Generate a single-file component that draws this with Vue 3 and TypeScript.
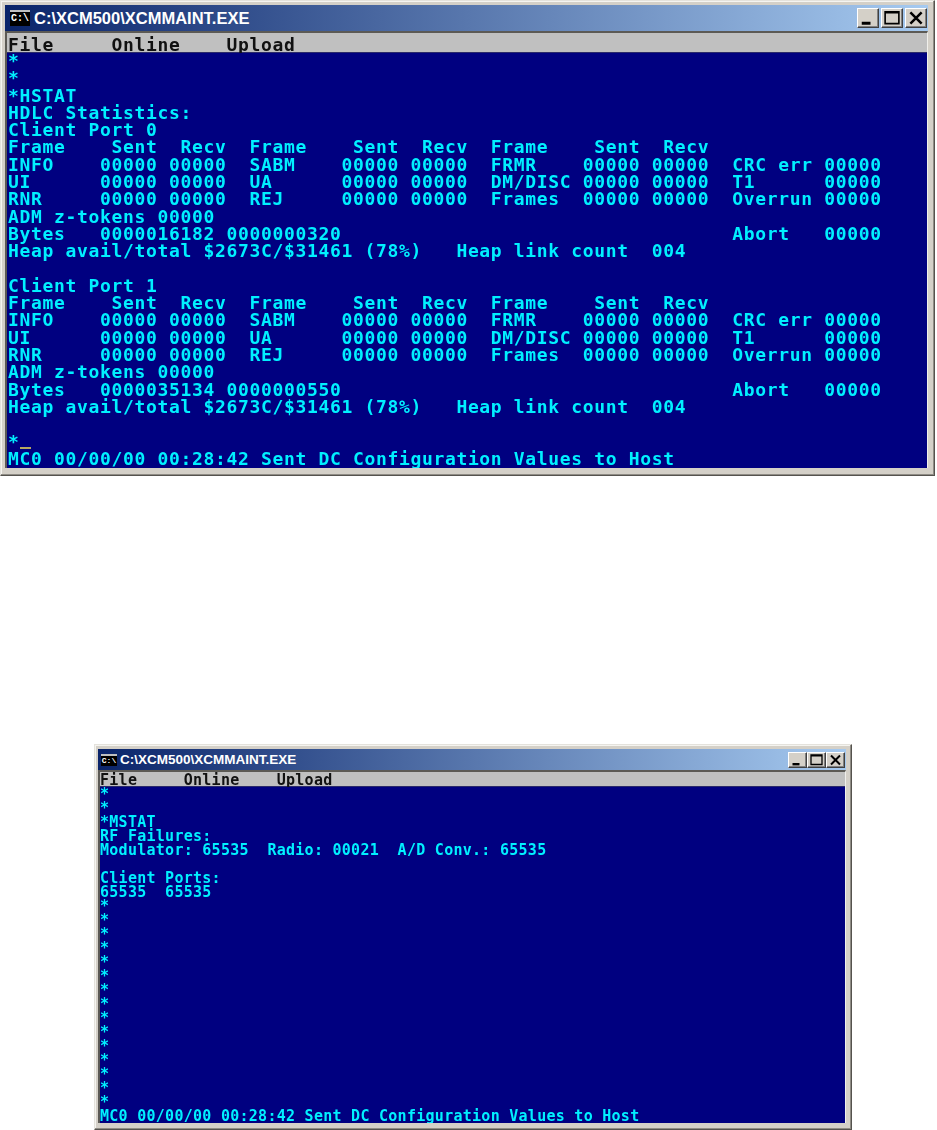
<script setup lang="ts">
const stats = (port: string, bytes: string): string[] => [
  `Client Port ${port}`,
  'Frame    Sent  Recv  Frame    Sent  Recv  Frame    Sent  Recv',
  'INFO    00000 00000  SABM    00000 00000  FRMR    00000 00000  CRC err 00000',
  'UI      00000 00000  UA      00000 00000  DM/DISC 00000 00000  T1      00000',
  'RNR     00000 00000  REJ     00000 00000  Frames  00000 00000  Overrun 00000',
  'ADM z-tokens 00000',
  `Bytes   ${bytes}                                  Abort   00000`,
  'Heap avail/total $2673C/$31461 (78%)   Heap link count  004',
]

const status = 'MC0 00/00/00 00:28:42 Sent DC Configuration Values to Host'

const windows = [
  {
    id: 'large',
    lines: [
      '*',
      '*',
      '*HSTAT',
      'HDLC Statistics:',
      ...stats('0', '0000016182 0000000320'),
      ' ',
      ...stats('1', '0000035134 0000000550'),
      ' ',
      '*',
      status,
    ],
  },
  {
    id: 'small',
    lines: [
      '*',
      '*',
      '*MSTAT',
      'RF Failures:',
      'Modulator: 65535  Radio: 00021  A/D Conv.: 65535',
      ' ',
      'Client Ports:',
      '65535  65535',
      ...Array.from({ length: 15 }, () => '*'),
      status,
    ],
  },
]
</script>

<template>
  <div class="page">
    <section v-for="win in windows" :key="win.id" class="window" :class="win.id">
      <header class="titlebar">
        <span class="appicon">C:\</span>
        <span class="title">C:\XCM500\XCMMAINT.EXE</span>
        <div class="controls">
          <button class="ctl">
            <svg viewBox="0 0 16 14"><rect x="3" y="10" width="7" height="2.4" fill="#000" /></svg>
          </button>
          <button class="ctl">
            <svg viewBox="0 0 16 14"><path d="M2.5 2h11v9.5h-11z M2.5 2.8h11" fill="none" stroke="#000" stroke-width="1.3" /></svg>
          </button>
          <button class="ctl close">
            <svg viewBox="0 0 16 14"><path d="M3.5 2.5 L12.5 11.5 M12.5 2.5 L3.5 11.5" fill="none" stroke="#000" stroke-width="2" /></svg>
          </button>
        </div>
      </header>
      <div class="client">
        <pre class="menu">File     Online    Upload</pre>
        <div class="screen">
          <pre class="console"><template v-for="(line, i) in win.lines" :key="i">{{ line }}
</template></pre>
          <span v-if="win.id === 'large'" class="cursor"></span>
        </div>
      </div>
    </section>
  </div>
</template>

<style>
html, body { background: #fff; }
</style>

<style scoped>
.page {
  width: 937px;
  height: 1130px;
  overflow: hidden;
  background: #fff;
  display: flex;
  flex-direction: column;
}
.window {
  box-sizing: border-box;
  display: flex;
  flex-direction: column;
  background: #d4d0c8;
  border: 1px solid;
  border-color: #e4e2dc #55534e #55534e #e4e2dc;
  box-shadow: inset -1px -1px 0 #8f8c85, inset 1px 1px 0 #f5f4f0;
}
.large {
  width: 935px;
  height: 476px;
  padding: 4px 6px 7px 4px;
}
.small {
  width: 758px;
  height: 386px;
  margin: 268px 0 0 94px;
  padding: 4px 5px 6px 3px;
}
.titlebar {
  display: flex;
  align-items: center;
  flex: none;
  background: linear-gradient(90deg, #0a246a, #a6caf0);
  color: #fff;
  font-family: "Liberation Sans", Arial, sans-serif;
  font-weight: 700;
}
.large .titlebar { height: 26px; padding: 0 1px 0 5px; }
.small .titlebar { height: 21px; padding: 0 1px 0 3px; }
.appicon {
  flex: none;
  background: #000;
  color: #fff;
  border-top: 2px solid #c0c0c0;
  font-family: "Liberation Mono", monospace;
  text-align: center;
  overflow: hidden;
}
.large .appicon { width: 20px; height: 14px; font-size: 10px; line-height: 14px; margin-right: 4px; }
.small .appicon { width: 16px; height: 10px; font-size: 8px; line-height: 10px; margin-right: 3px; }
.large .title { font-size: 16.5px; }
.small .title { font-size: 13.5px; }
.controls {
  margin-left: auto;
  display: flex;
}
.large .controls { gap: 2px; }
.ctl {
  display: block;
  padding: 0;
  background: #d4d0c8;
  border: 1px solid;
  border-color: #fff #404040 #404040 #fff;
  box-shadow: inset -1px -1px 0 #808080;
}
.ctl svg { display: block; width: 100%; height: 100%; }
.large .ctl { width: 22px; height: 20px; }
.small .ctl { width: 19px; height: 16px; }
.client {
  flex: 1;
  min-height: 0;
  display: flex;
  flex-direction: column;
  border-top: 2px solid #5c5a55;
  border-left: 2px solid #5c5a55;
  border-right: 1px solid #f0efeb;
  font-family: "Liberation Mono", monospace;
  font-weight: 700;
}
pre { margin: 0; }
.menu {
  flex: none;
  background: #c0c0c0;
  color: #111;
  border-bottom: 1px solid #2a2a6a;
  filter: blur(0.3px);
}
.screen {
  position: relative;
  flex: 1;
  min-height: 0;
  overflow: hidden;
  background: #000080;
}
.console {
  color: #00f0ff;
  filter: blur(0.3px);
}
.large .menu, .large .console {
  font-size: 18px;
  letter-spacing: 0.66px;
  line-height: 17.3px;
  padding-left: 1px;
}
.large .console { margin-top: -1px; }
.large .menu { height: 19px; line-height: 24px; }
.small .menu, .small .console {
  font-size: 15px;
  letter-spacing: 0.27px;
  line-height: 14px;
}
.small .menu { height: 14px; line-height: 16px; }
.cursor {
  position: absolute;
  left: 13px;
  top: 394px;
  width: 11px;
  height: 2px;
  background: #b8a860;
}
</style>
